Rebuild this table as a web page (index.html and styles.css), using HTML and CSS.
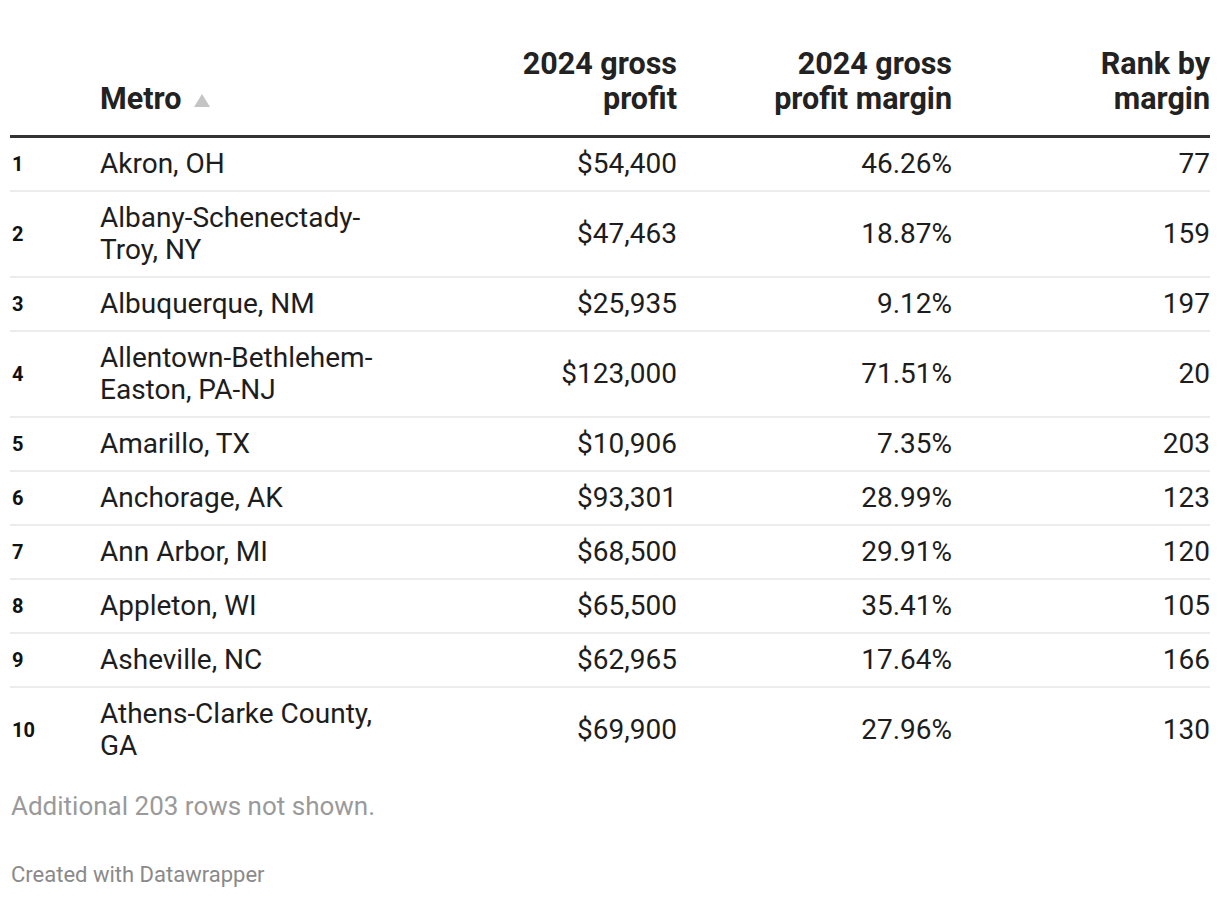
FILE: index.html
```html
<!DOCTYPE html>
<html>
<head>
<meta charset="utf-8">
<link rel="stylesheet" href="styles.css">
</head>
<body>
<div class="chart">
  <table class="dw-table">
    <colgroup>
      <col class="c-idx"><col class="c-metro"><col class="c-profit"><col class="c-margin"><col class="c-rank">
    </colgroup>
    <thead>
      <tr>
        <th class="idx"></th>
        <th class="metro">Metro<span class="sort" aria-label="sorted ascending"></span></th>
        <th class="num">2024 gross<br>profit</th>
        <th class="num">2024 gross<br>profit margin</th>
        <th class="num">Rank by<br>margin</th>
      </tr>
    </thead>
    <tbody>
      <tr><td class="idx">1</td><td class="metro">Akron, OH</td><td class="num">$54,400</td><td class="num">46.26%</td><td class="num">77</td></tr>
      <tr><td class="idx">2</td><td class="metro">Albany-Schenectady-Troy, NY</td><td class="num">$47,463</td><td class="num">18.87%</td><td class="num">159</td></tr>
      <tr><td class="idx">3</td><td class="metro">Albuquerque, NM</td><td class="num">$25,935</td><td class="num">9.12%</td><td class="num">197</td></tr>
      <tr><td class="idx">4</td><td class="metro">Allentown-Bethlehem-Easton, PA-NJ</td><td class="num">$123,000</td><td class="num">71.51%</td><td class="num">20</td></tr>
      <tr><td class="idx">5</td><td class="metro">Amarillo, TX</td><td class="num">$10,906</td><td class="num">7.35%</td><td class="num">203</td></tr>
      <tr><td class="idx">6</td><td class="metro">Anchorage, AK</td><td class="num">$93,301</td><td class="num">28.99%</td><td class="num">123</td></tr>
      <tr><td class="idx">7</td><td class="metro">Ann Arbor, MI</td><td class="num">$68,500</td><td class="num">29.91%</td><td class="num">120</td></tr>
      <tr><td class="idx">8</td><td class="metro">Appleton, WI</td><td class="num">$65,500</td><td class="num">35.41%</td><td class="num">105</td></tr>
      <tr><td class="idx">9</td><td class="metro">Asheville, NC</td><td class="num">$62,965</td><td class="num">17.64%</td><td class="num">166</td></tr>
      <tr class="last"><td class="idx">10</td><td class="metro">Athens-Clarke County, GA</td><td class="num">$69,900</td><td class="num">27.96%</td><td class="num">130</td></tr>
    </tbody>
  </table>
  <p class="more">Additional 203 rows not shown.</p>
  <p class="credit">Created with Datawrapper</p>
</div>
</body>
</html>
```

FILE: styles.css
```css
html, body {
  margin: 0;
  padding: 0;
  background: #fff;
}
body {
  font-family: Roboto, "Liberation Sans", sans-serif;
  color: #1d1d1d;
}
.chart {
  padding: 0 10px;
}
.dw-table {
  width: 1200px;
  border-collapse: collapse;
  table-layout: fixed;
}
.c-idx { width: 90px; }
.c-metro { width: 290px; }
.c-profit { width: 287px; }
.c-margin { width: 275px; }
.c-rank { width: 258px; }

.dw-table th {
  font-weight: 700;
  font-size: 30.5px;
  line-height: 35px;
  color: #222;
  vertical-align: bottom;
  padding: 46px 0 19px 0;
  border-bottom: 3px solid #333;
}
.dw-table th.metro { text-align: left; }
.dw-table th.num { text-align: right; }
.sort {
  display: inline-block;
  width: 0;
  height: 0;
  border-left: 8px solid transparent;
  border-right: 8px solid transparent;
  border-bottom: 13px solid #c4c4c4;
  margin-left: 13px;
  vertical-align: 2px;
}
.dw-table td {
  font-size: 28px;
  line-height: 32px;
  padding: 10px 0;
  border-bottom: 2px solid #ececec;
  vertical-align: middle;
}
.dw-table tr.last td { border-bottom: none; }
.dw-table td.idx {
  font-weight: 700;
  font-size: 20px;
  padding-left: 2px;
  color: #111;
}
.dw-table td.metro { text-align: left; }
.dw-table td.num { text-align: right; }
.more {
  margin: 19px 0 0 1px;
  font-size: 26px;
  line-height: 30px;
  color: #9a9a9a;
}
.credit {
  margin: 41px 0 0 1px;
  font-size: 22px;
  line-height: 26px;
  color: #8a8a8a;
}
```
